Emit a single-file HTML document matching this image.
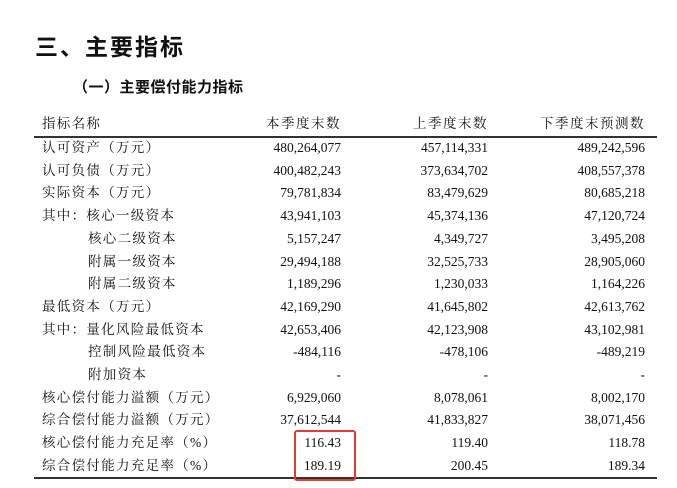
<!DOCTYPE html>
<html><head><meta charset="utf-8"><style>
body{margin:0;width:677px;height:488px;background:#fff;position:relative;overflow:hidden;font-family:"Liberation Serif","Noto Serif CJK SC",serif;color:#111}
.h1{position:absolute;left:35px;top:28px;font:bold 23px "Liberation Sans","Noto Sans CJK SC",sans-serif;letter-spacing:2px}
.h2{position:absolute;left:73px;top:76px;font:bold 15px "Liberation Sans","Noto Sans CJK SC",sans-serif;letter-spacing:.5px}
.r{position:absolute;left:34px;width:623px;height:22.7px;font-size:13.5px;line-height:22.7px}
.r span{position:absolute}
.a{left:8px;letter-spacing:1.3px}.i{left:54px;letter-spacing:1.3px}
.c1{right:316px}.c2{right:169px}.c3{right:12px}
.line{position:absolute;left:34px;width:623px;height:1.5px;background:#333}
.box{position:absolute;left:294px;top:430px;width:58px;height:47px;border:2px solid #e53935;border-radius:3px}
</style></head><body>
<div class="h1">三、主要指标</div>
<div class="h2">（一）主要偿付能力指标</div>
<div class="r" style="top:113px"><span class="a">指标名称</span><span class="c1" style="letter-spacing:1.5px">本季度末数</span><span class="c2" style="letter-spacing:1.5px">上季度末数</span><span class="c3" style="letter-spacing:1.5px">下季度末预测数</span></div>
<div class="line" style="top:136px"></div>
<div class="r" style="top:137px"><span class="a">认可资产（万元）</span><span class="c1">480,264,077</span><span class="c2">457,114,331</span><span class="c3">489,242,596</span></div>
<div class="r" style="top:159.7px"><span class="a">认可负债（万元）</span><span class="c1">400,482,243</span><span class="c2">373,634,702</span><span class="c3">408,557,378</span></div>
<div class="r" style="top:182.4px"><span class="a">实际资本（万元）</span><span class="c1">79,781,834</span><span class="c2">83,479,629</span><span class="c3">80,685,218</span></div>
<div class="r" style="top:205.1px"><span class="a">其中：核心一级资本</span><span class="c1">43,941,103</span><span class="c2">45,374,136</span><span class="c3">47,120,724</span></div>
<div class="r" style="top:227.8px"><span class="i">核心二级资本</span><span class="c1">5,157,247</span><span class="c2">4,349,727</span><span class="c3">3,495,208</span></div>
<div class="r" style="top:250.5px"><span class="i">附属一级资本</span><span class="c1">29,494,188</span><span class="c2">32,525,733</span><span class="c3">28,905,060</span></div>
<div class="r" style="top:273.2px"><span class="i">附属二级资本</span><span class="c1">1,189,296</span><span class="c2">1,230,033</span><span class="c3">1,164,226</span></div>
<div class="r" style="top:295.9px"><span class="a">最低资本（万元）</span><span class="c1">42,169,290</span><span class="c2">41,645,802</span><span class="c3">42,613,762</span></div>
<div class="r" style="top:318.6px"><span class="a">其中：量化风险最低资本</span><span class="c1">42,653,406</span><span class="c2">42,123,908</span><span class="c3">43,102,981</span></div>
<div class="r" style="top:341.3px"><span class="i">控制风险最低资本</span><span class="c1">-484,116</span><span class="c2">-478,106</span><span class="c3">-489,219</span></div>
<div class="r" style="top:364px"><span class="i">附加资本</span><span class="c1">-</span><span class="c2">-</span><span class="c3">-</span></div>
<div class="r" style="top:386.7px"><span class="a">核心偿付能力溢额（万元）</span><span class="c1">6,929,060</span><span class="c2">8,078,061</span><span class="c3">8,002,170</span></div>
<div class="r" style="top:409.4px"><span class="a">综合偿付能力溢额（万元）</span><span class="c1">37,612,544</span><span class="c2">41,833,827</span><span class="c3">38,071,456</span></div>
<div class="r" style="top:432.1px"><span class="a">核心偿付能力充足率（%）</span><span class="c1">116.43</span><span class="c2">119.40</span><span class="c3">118.78</span></div>
<div class="r" style="top:454.8px"><span class="a">综合偿付能力充足率（%）</span><span class="c1">189.19</span><span class="c2">200.45</span><span class="c3">189.34</span></div>
<div class="line" style="top:477px"></div>
<div class="box"></div>
</body></html>
